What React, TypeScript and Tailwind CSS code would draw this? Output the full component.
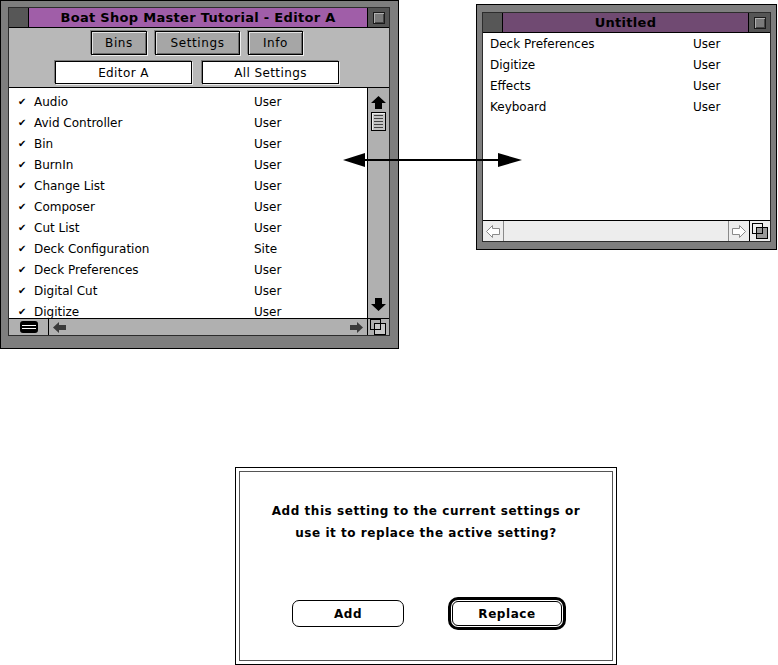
import React from "react";

const leftRows: [string, string][] = [
  ["Audio", "User"],
  ["Avid Controller", "User"],
  ["Bin", "User"],
  ["BurnIn", "User"],
  ["Change List", "User"],
  ["Composer", "User"],
  ["Cut List", "User"],
  ["Deck Configuration", "Site"],
  ["Deck Preferences", "User"],
  ["Digital Cut", "User"],
  ["Digitize", "User"],
];

const rightRows: [string, string][] = [
  ["Deck Preferences", "User"],
  ["Digitize", "User"],
  ["Effects", "User"],
  ["Keyboard", "User"],
];

// small square in the right end of a title bar
const ZoomBox = () => (
  <div className="w-[22px] h-full bg-[#555] border-l border-black flex items-center justify-center">
    <div className="w-[12px] h-[12px] bg-[#7a7a7a] border border-[#1a1a1a] shadow-[inset_1px_1px_0_#b0b0b0,inset_-1px_-1px_0_#444]" />
  </div>
);

const GrowBox = ({ fill }: { fill: string }) => (
  <svg width="17" height="17" viewBox="0 0 17 17">
    <rect x="4.5" y="4.5" width="11" height="11" fill={fill} stroke="black" />
    <rect x="0.5" y="0.5" width="10" height="10" fill="none" stroke="black" />
  </svg>
);

const MacButton = ({ label, w }: { label: string; w: string }) => (
  <div
    className={`${w} h-[24px] border border-black bg-[#a6a6a6] shadow-[inset_1px_1px_0_#e2e2e2,inset_-1px_-1px_0_#686868,1px_1px_0_#eee,-1px_-1px_0_#808080] flex items-center justify-center text-[12px] tracking-[0.6px] text-black`}
  >
    {label}
  </div>
);

const Field = ({ label }: { label: string }) => (
  <div className="w-[137px] h-[23px] border border-black bg-white shadow-[-1px_-1px_0_#7a7a7a,1px_1px_0_#ececec] flex items-center justify-center text-[12px] tracking-[0.4px] text-black">
    {label}
  </div>
);

const LeftWindow = () => (
  <div className="w-[399px] h-[349px] shrink-0 border border-black bg-[#7e7e7e] pt-[6px] pl-[7px] pr-[8px] pb-[12px] flex">
    <div className="flex-1 flex flex-col border border-[#2c2c2c] min-w-0">
      {/* title bar */}
      <div className="h-[20px] flex border-b border-black shrink-0">
        <div className="w-[20px] h-full bg-[#575757] border-r border-black" />
        <div className="flex-1 bg-[#a05ea8] flex items-center justify-center text-[13px] font-bold text-black tracking-[0.3px]">
          Boat Shop Master Tutorial - Editor A
        </div>
        <ZoomBox />
      </div>
      {/* command panel */}
      <div className="h-[60px] shrink-0 bg-[#b8b8b8] border-b border-black flex flex-col items-center pr-[4px]">
        <div className="flex gap-[8px] mt-[3px]">
          <MacButton label="Bins" w="w-[56px]" />
          <MacButton label="Settings" w="w-[85px]" />
          <MacButton label="Info" w="w-[55px]" />
        </div>
        <div className="flex gap-[10px] mt-[6px]">
          <Field label="Editor A" />
          <Field label="All Settings" />
        </div>
      </div>
      {/* list + vertical scroll bar */}
      <div className="flex-1 flex min-h-0">
        <div className="flex-1 bg-white overflow-hidden pt-[3px] pl-[9px]">
          {leftRows.map(([name, owner]) => (
            <div key={name} className="h-[21px] grid grid-cols-[16px_220px_auto] items-center text-[12px] text-black">
              <span className="text-[10px]">✔</span>
              <span>{name}</span>
              <span>{owner}</span>
            </div>
          ))}
        </div>
        <div className="w-[22px] bg-[#b0b0b0] border-l border-black flex flex-col items-center">
          <svg className="mt-[8px]" width="15" height="13" viewBox="0 0 15 13">
            <polygon points="7.5,0 15,7 11,7 11,13 4,13 4,7 0,7" fill="black" />
          </svg>
          <div className="mt-[3px] w-[15px] h-[19px] border border-black bg-[#c4c4c4] shadow-[inset_1px_1px_0_#eee] flex flex-col items-center justify-center gap-[2px]">
            {[0, 1, 2, 3, 4].map((i) => (
              <div key={i} className="w-[9px] h-[1px] bg-[#444]" />
            ))}
          </div>
          <div className="flex-1" />
          <svg className="mb-[7px]" width="15" height="13" viewBox="0 0 15 13">
            <polygon points="7.5,13 15,6 11,6 11,0 4,0 4,6 0,6" fill="black" />
          </svg>
        </div>
      </div>
      {/* horizontal scroll bar */}
      <div className="h-[17px] shrink-0 flex border-t border-black bg-[#b0b0b0]">
        <div className="w-[40px] border-r border-black flex items-center justify-center">
          <svg width="18" height="12" viewBox="0 0 18 12">
            <rect x="1" y="1" width="16" height="10" rx="2" fill="white" stroke="black" strokeWidth="2" />
            <rect x="1" y="5" width="16" height="2" fill="black" />
            <rect x="2" y="2" width="14" height="2" fill="black" />
            <rect x="2" y="8" width="14" height="2" fill="black" />
          </svg>
        </div>
        <div className="flex-1 flex items-center justify-between px-[4px]">
          <svg width="13" height="11" viewBox="0 0 13 11">
            <polygon points="0,5.5 6,0 6,3 13,3 13,8 6,8 6,11" fill="#3a3a3a" />
          </svg>
          <svg width="13" height="11" viewBox="0 0 13 11">
            <polygon points="13,5.5 7,0 7,3 0,3 0,8 7,8 7,11" fill="#3a3a3a" />
          </svg>
        </div>
        <div className="w-[22px] border-l border-black flex items-center justify-center">
          <GrowBox fill="#c8c8c8" />
        </div>
      </div>
    </div>
  </div>
);

const RightWindow = () => (
  <div className="w-[301px] h-[246px] shrink-0 ml-[77px] mt-[4px] border border-black bg-[#7e7e7e] pt-[7px] px-[5px] pb-[7px] flex">
    <div className="flex-1 flex flex-col border border-[#2c2c2c] min-w-0">
      <div className="h-[20px] flex border-b border-black shrink-0">
        <div className="w-[20px] h-full bg-[#575757] border-r border-black" />
        <div className="flex-1 bg-[#704a72] flex items-center justify-center text-[13px] font-bold text-black tracking-[0.3px]">
          Untitled
        </div>
        <ZoomBox />
      </div>
      <div className="flex-1 bg-white overflow-hidden pl-[7px]">
        {rightRows.map(([name, owner]) => (
          <div key={name} className="h-[21px] grid grid-cols-[203px_auto] items-center text-[12px] text-black">
            <span>{name}</span>
            <span>{owner}</span>
          </div>
        ))}
      </div>
      <div className="h-[21px] shrink-0 flex border-t border-black bg-[#ededed]">
        <div className="w-[21px] border-r border-[#8a8a8a] flex items-center justify-center">
          <svg width="14" height="13" viewBox="0 0 14 13">
            <polygon points="0.5,6.5 6.5,0.5 6.5,3.5 13.5,3.5 13.5,9.5 6.5,9.5 6.5,12.5" fill="white" stroke="#8a8a8a" />
          </svg>
        </div>
        <div className="flex-1" />
        <div className="w-[21px] border-l border-[#8a8a8a] flex items-center justify-center">
          <svg width="14" height="13" viewBox="0 0 14 13">
            <polygon points="13.5,6.5 7.5,0.5 7.5,3.5 0.5,3.5 0.5,9.5 7.5,9.5 7.5,12.5" fill="white" stroke="#8a8a8a" />
          </svg>
        </div>
        <div className="w-[21px] border-l border-black flex items-center justify-center">
          <GrowBox fill="#9a9a9a" />
        </div>
      </div>
    </div>
  </div>
);

const Dialog = () => (
  <div className="ml-[235px] mt-[118px] w-[382px] h-[198px] border border-black bg-white p-[3px] flex">
    <div className="flex-1 border border-[#555] flex flex-col items-center pt-[28px] text-black font-bold">
      <p className="text-[12px] leading-[22px] tracking-[0.55px] text-center">
        Add this setting to the current settings or
        <br />
        use it to replace the active setting?
      </p>
      <div className="mt-[53px] flex items-center gap-[44px] pl-[6px]">
        <div className="w-[112px] h-[27px] border border-black rounded-[7px] flex items-center justify-center text-[12px] tracking-[0.55px]">
          Add
        </div>
        <div className="border-[3px] border-black rounded-[10px] p-[1px]">
          <div className="w-[110px] h-[25px] border border-black rounded-[6px] flex items-center justify-center text-[12px] tracking-[0.55px]">
            Replace
          </div>
        </div>
      </div>
    </div>
  </div>
);

export default function App() {
  return (
    <div className="relative w-[778px] h-[665px] bg-white overflow-hidden font-['DejaVu_Sans',sans-serif]">
      <div className="flex items-start">
        <LeftWindow />
        <RightWindow />
      </div>
      <Dialog />
      {/* double-headed arrow drawn across both windows */}
      <svg className="absolute left-[340px] top-[152px]" width="186" height="16" viewBox="0 0 186 16">
        <line x1="20" y1="8" x2="165" y2="8" stroke="black" strokeWidth="2" />
        <polygon points="3,8 25,1 25,15" fill="black" />
        <polygon points="182,8 158,1 158,15" fill="black" />
      </svg>
    </div>
  );
}
